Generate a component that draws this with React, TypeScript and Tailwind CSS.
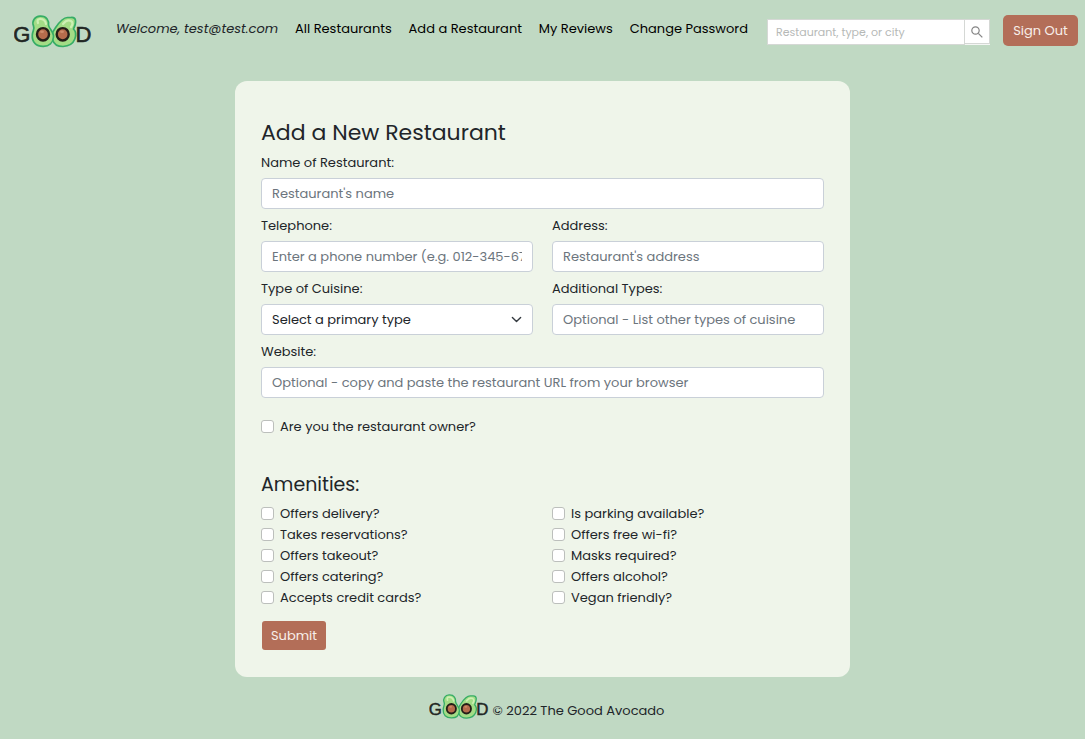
import type { InputHTMLAttributes } from "react";

function Logo({ className }: { className: string }) {
  return (
    <svg viewBox="0 0 78 34" className={className} role="img" aria-label="Good">
      <text x="-0.700" y="27" fontSize="22" fill="#222724" stroke="#222724" strokeWidth="0.6" fontFamily="Liberation Sans, Arial, sans-serif">G</text>
      <path d="M57 2.500C63 2 62.300 8 59.500 14C63.500 18 62.500 31 49 31.500C37 31.500 36 20 41 13.500C44 9 48 2.500 53.500 2.500Z" fill="#a3dc86" stroke="#36ad66" strokeWidth="1.700" />
      <path d="M49 9Q53 4 57 6Q60 8 57 12" fill="none" stroke="#cdf0b4" strokeWidth="2.200" strokeLinecap="round" />
      <path d="M26 1.200C33 .8 35 6 34.500 10C35 14 40 17 39.500 22C39 28 35 31.300 29.500 31.300C22 31.500 17.800 27 18.300 20C18.500 16 21 14 19.500 11C17.500 6 21 1.400 26 1.200Z" fill="#a3dc86" stroke="#36ad66" strokeWidth="1.700" />
      <path d="M24 8Q22.500 4 26 4Q31 4 32 9" fill="none" stroke="#cdf0b4" strokeWidth="2.200" strokeLinecap="round" />
      <ellipse cx="29" cy="19.300" rx="6" ry="6.200" fill="#b66c4c" stroke="#241e18" strokeWidth="2.400" />
      <ellipse cx="48.700" cy="19.300" rx="6" ry="6.200" fill="#b66c4c" stroke="#241e18" strokeWidth="2.400" />
      <ellipse cx="28" cy="16.800" rx="2" ry="1.200" fill="#cf8c6a" />
      <ellipse cx="48" cy="16.800" rx="2" ry="1.200" fill="#cf8c6a" />
      <text x="61.500" y="27" fontSize="22" fill="#222724" stroke="#222724" strokeWidth="0.6" fontFamily="Liberation Sans, Arial, sans-serif">D</text>
    </svg>
  );
}

const control =
  "block h-[31px] w-full rounded border border-[#c9d0d8] bg-white px-2.5 text-[13px] text-[#212529] placeholder:text-[#6c757d] placeholder:opacity-100";

function Field({ id, label, className = "", ...rest }: { id: string; label: string } & InputHTMLAttributes<HTMLInputElement>) {
  return (
    <div className={className}>
      <label htmlFor={id} className="mb-[5px] block leading-5">{label}</label>
      <input id={id} className={control} {...rest} />
    </div>
  );
}

function Check({ id, label }: { id: string; label: string }) {
  return (
    <div className="flex h-[21px] items-center gap-1.5">
      <input id={id} type="checkbox" className="size-[13px] shrink-0 appearance-none rounded-[3px] border border-[#bcbfbc] bg-white checked:bg-[#b36e58]" />
      <label htmlFor={id}>{label}</label>
    </div>
  );
}

const links = ["All Restaurants", "Add a Restaurant", "My Reviews", "Change Password"];

const amenities = [
  ["Offers delivery?", "Takes reservations?", "Offers takeout?", "Offers catering?", "Accepts credit cards?"],
  ["Is parking available?", "Offers free wi-fi?", "Masks required?", "Offers alcohol?", "Vegan friendly?"],
];

export default function App() {
  return (
    <div className="min-h-screen bg-[#c0d9c3] font-['Poppins','Inter',sans-serif] text-[13px] text-[#212529]">
      <header className="flex items-start pt-[15px] pr-[7px] pl-3.5">
        <a href="#home" className="mr-6 shrink-0">
          <Logo className="block h-[34px] w-[78px]" />
        </a>
        <nav className="mt-1 flex flex-1 items-center justify-between leading-5 whitespace-nowrap">
          <span className="italic">Welcome, test@test.com</span>
          {links.map((link) => (
            <a key={link} href="#top" className="text-black">{link}</a>
          ))}
        </nav>
        <form role="search" className="mt-1 ml-[19px] flex h-[26px] w-[223px] shrink-0">
          <input
            type="search"
            aria-label="Search restaurants"
            placeholder="Restaurant, type, or city"
            className="min-w-0 flex-1 border border-[#d5d8d5] bg-white px-2 text-[11px] placeholder:text-[#b6b9b7] placeholder:opacity-100"
          />
          <button type="button" aria-label="Search" className="flex h-[25px] w-[25px] items-center justify-center border border-l-0 border-[#d5d8d5] bg-white shadow-[0_1px_0_#f4f6f4]">
            <svg viewBox="0 0 12 12" className="size-3" fill="none" stroke="#858585" strokeWidth="1.200">
              <circle cx="4.500" cy="4.500" r="3.700" />
              <path d="M7.300 7.300L11.300 11.300" />
            </svg>
          </button>
        </form>
        <button type="button" className="ml-[13px] h-[31px] w-[75px] shrink-0 rounded-[5px] bg-[#b36e58] text-[#f8eeea]">Sign Out</button>
      </header>

      <main className="mx-auto mt-8 max-w-[615px] rounded-xl bg-[#eff5ea] px-[26px] pt-[38px] pb-[27px]">
        <form>
          <h1 className="mb-1.5 text-[22px] leading-7">Add a New Restaurant</h1>
          <div className="grid grid-cols-2 gap-x-[19px] gap-y-[7px]">
            <Field id="name" label="Name of Restaurant:" placeholder="Restaurant's name" className="col-span-2" />
            <Field id="phone" label="Telephone:" type="tel" placeholder="Enter a phone number (e.g. 012-345-6789)" />
            <Field id="address" label="Address:" placeholder="Restaurant's address" />
            <div>
              <label htmlFor="cuisine" className="mb-[5px] block leading-5">Type of Cuisine:</label>
              <div className="relative">
                <select id="cuisine" className={`${control} appearance-none`}>
                  <option>Select a primary type</option>
                </select>
                <svg viewBox="0 0 16 16" className="pointer-events-none absolute top-[10px] right-[11px] size-[11px]" fill="none" stroke="#343a40" strokeWidth="2" strokeLinecap="round" strokeLinejoin="round">
                  <path d="m2 5 6 6 6-6" />
                </svg>
              </div>
            </div>
            <Field id="types" label="Additional Types:" placeholder="Optional - List other types of cuisine" />
            <Field id="website" label="Website:" type="url" placeholder="Optional - copy and paste the restaurant URL from your browser" className="col-span-2" />
          </div>
          <div className="mt-[18px]">
            <Check id="owner" label="Are you the restaurant owner?" />
          </div>
          <h2 className="mt-9 mb-1.5 text-[19px] leading-6">Amenities:</h2>
          <div className="grid grid-cols-2 gap-x-[19px]">
            {amenities.map((column, index) => (
              <div key={index}>
                {column.map((item) => (
                  <Check key={item} id={item} label={item} />
                ))}
              </div>
            ))}
          </div>
          <button type="button" className="mt-[13px] ml-px block h-[29px] w-16 rounded-[3px] bg-[#b36e58] text-[#f8eeea]">Submit</button>
        </form>
      </main>

      <footer className="flex items-center justify-center gap-1 pt-4 pl-2">
        <Logo className="h-[26px] w-[60px]" />
        <span className="pt-2">© 2022 The Good Avocado</span>
      </footer>
    </div>
  );
}
